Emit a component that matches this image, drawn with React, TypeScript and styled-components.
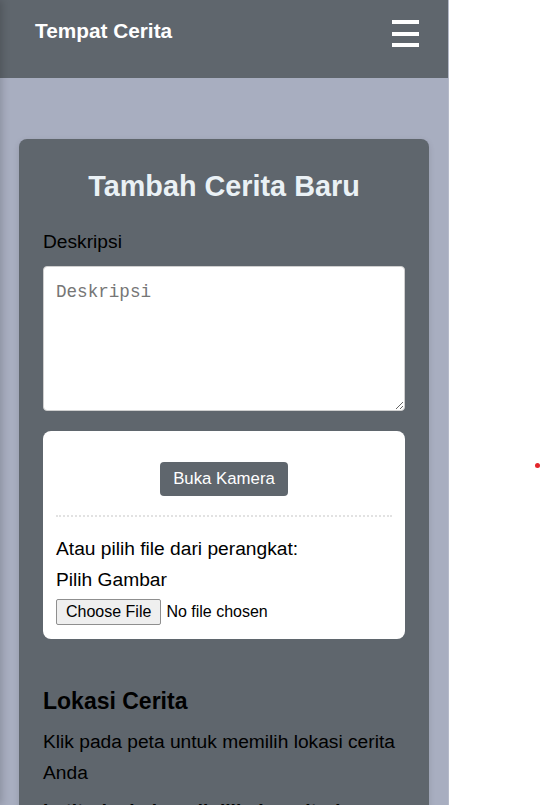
import React from "react";
import styled, { createGlobalStyle } from "styled-components";

const GlobalStyle = createGlobalStyle`
  html, body { margin: 0; padding: 0; background: #ffffff; }
  body {
    font-family: "Liberation Sans", Arial, sans-serif;
    font-size: 19.2px;
    line-height: 1.6;
    overflow: hidden;
  }
  * { box-sizing: border-box; }
`;

const Page = styled.div`
  position: relative;
  width: 542px;
  height: 805px;
  overflow: hidden;
  background: #ffffff;
`;

const Shell = styled.div`
  width: 449px;
  min-height: 805px;
  background: #a8aec0;
  border-right: 1px solid #b4b9c8;
`;

const Drawer = styled.nav`
  position: absolute;
  left: 0;
  top: 0;
  width: 220px;
  height: 100%;
  background: #5f666d;
  transform: translateX(-100%);
  box-shadow: 2px 0 8px rgba(0, 0, 0, 0.18);
`;

const Header = styled.header`
  height: 78px;
  background: #5f666d;
  display: flex;
  justify-content: space-between;
  align-items: flex-start;
  padding: 19px 28px 0 35px;
`;

const Brand = styled.div`
  color: #ffffff;
  font-weight: 700;
  font-size: 20.8px;
  line-height: 23px;
`;

const MenuButton = styled.button`
  width: 28px;
  height: 27px;
  padding: 0;
  margin-top: 1px;
  border: none;
  background: transparent;
  display: flex;
  flex-direction: column;
  justify-content: space-between;
  cursor: pointer;
`;

const Bar = styled.span`
  display: block;
  width: 27px;
  height: 4px;
  background: #ffffff;
`;

const Main = styled.main`
  padding: 61px 19px 0 19px;
`;

const Card = styled.section`
  background: #5f666d;
  border-radius: 8px;
  padding: 24px 24px 40px;
  box-shadow: 0 2px 6px rgba(0, 0, 0, 0.12);
`;

const Title = styled.h2`
  margin: 0 0 18px;
  text-align: center;
  color: #eaf1f5;
  font-size: 28.8px;
  font-weight: 700;
`;

const Label = styled.label`
  display: block;
  color: #000000;
  margin-bottom: 8px;
`;

const TextArea = styled.textarea`
  display: block;
  width: 100%;
  height: 145px;
  padding: 11px 12px;
  border: 1px solid #cfcfcf;
  border-radius: 4px;
  background: #ffffff;
  font-family: "Liberation Mono", "DejaVu Sans Mono", monospace;
  font-size: 17.6px;
  line-height: 1.6;
  resize: vertical;
  &::placeholder { color: #767676; }
`;

const PhotoBox = styled.div`
  margin-top: 20px;
  background: #ffffff;
  border-radius: 8px;
  padding: 31px 13px 14px;
`;

const CameraRow = styled.div`
  display: flex;
  justify-content: center;
  padding-bottom: 19px;
  border-bottom: 2px dotted #e2e2e2;
`;

const CameraButton = styled.button`
  height: 34px;
  padding: 0 13px;
  border: none;
  border-radius: 4px;
  background: #5f666d;
  color: #ffffff;
  font-family: "Liberation Sans", Arial, sans-serif;
  font-size: 16.8px;
`;

const Hint = styled.p`
  margin: 17px 0 0;
  color: #000000;
`;

const FileLabel = styled.label`
  display: block;
  color: #000000;
  margin-bottom: 4px;
`;

const FileInput = styled.input`
  display: block;
  font-family: "Liberation Sans", Arial, sans-serif;
  font-size: 16px;
  line-height: normal;
  color: #000000;
  &::file-selector-button {
    font: inherit;
    height: 26px;
    padding: 0 9px;
    margin-right: 5px;
    border: 1px solid #8f8f8f;
    border-radius: 2px;
    background: #efefef;
    color: #000000;
  }
`;

const SectionTitle = styled.h3`
  margin: 44px 0 7px;
  font-size: 23px;
  font-weight: 700;
  color: #000000;
`;

const Text = styled.p<{ $bold?: boolean }>`
  margin: ${(p) => (p.$bold ? "8px" : "0")} 0 7px;
  color: #000000;
  font-weight: ${(p) => (p.$bold ? 700 : 400)};
`;

const Dot = styled.span`
  position: absolute;
  left: 535px;
  top: 463px;
  width: 5px;
  height: 5px;
  border-radius: 50%;
  background: #e3262b;
`;

export default function App() {
  return (
    <>
      <GlobalStyle />
      <Page>
        <Drawer aria-hidden="true" />
        <Shell>
          <Header>
            <Brand>Tempat Cerita</Brand>
            <MenuButton aria-label="Menu">
              <Bar />
              <Bar />
              <Bar />
            </MenuButton>
          </Header>
          <Main>
            <Card>
              <Title>Tambah Cerita Baru</Title>
              <Label htmlFor="desc">Deskripsi</Label>
              <TextArea id="desc" placeholder="Deskripsi" />
              <PhotoBox>
                <CameraRow>
                  <CameraButton type="button">Buka Kamera</CameraButton>
                </CameraRow>
                <Hint>Atau pilih file dari perangkat:</Hint>
                <FileLabel htmlFor="photo">Pilih Gambar</FileLabel>
                <FileInput id="photo" type="file" accept="image/*" />
              </PhotoBox>
              <SectionTitle>Lokasi Cerita</SectionTitle>
              <Text>Klik pada peta untuk memilih lokasi cerita Anda</Text>
              <Text $bold>Latitude: belum dipilih, Longitude: belum dipilih</Text>
            </Card>
          </Main>
        </Shell>
        <Dot />
      </Page>
    </>
  );
}
